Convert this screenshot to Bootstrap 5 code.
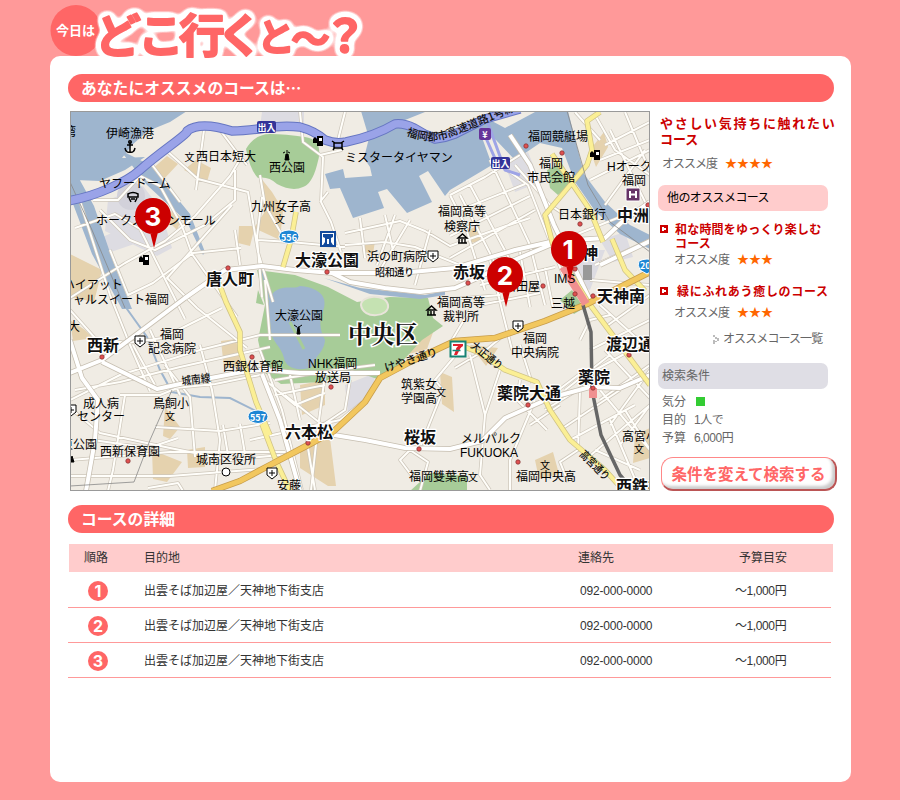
<!DOCTYPE html>
<html lang="ja">
<head>
<meta charset="utf-8">
<meta name="viewport" content="width=device-width, initial-scale=1">
<title>今日はどこ行くと〜？</title>
<link href="https://cdn.jsdelivr.net/npm/bootstrap@5.3.0/dist/css/bootstrap.min.css" rel="stylesheet">
<style>
body{background:#f99;font-family:"Liberation Sans","Noto Sans CJK JP",sans-serif;font-size:12px;line-height:18px;color:#333;width:900px;height:800px;overflow:hidden}
.site-logo{display:block;margin-left:50px;height:56px;overflow:visible;position:relative;z-index:1}
.logo-face{font-family:"Noto Sans CJK JP",sans-serif;font-weight:700}
.panel{width:801px;height:726px;margin-left:50px;border-radius:10px;padding:18px 17px 0 18px}
.bar-title{height:28px;width:766px;border-radius:14px;background:#f66;color:#fff;font:700 15.8px/28px "Noto Sans CJK JP",sans-serif;padding-left:13px;margin:0}
.map-box{display:block;width:580px;height:380px;margin:9px 0 0 2px;flex:none}
.side{width:181px;margin-left:7px;padding-top:14px;white-space:nowrap;flex:none}
.pick{font-size:13px;line-height:15.5px;font-weight:700;color:#c00;margin:0 0 0 3px;height:31px}
.pick-wide{letter-spacing:1.7px}
.rate{color:#666;height:18px;margin-left:5px}
.rate-name{letter-spacing:-1px;width:63px}
.stars{color:#f60;display:flex}
.pill{width:170px;height:26px;border-radius:7px;line-height:27px;margin-left:1px}
.pill-pink{background:#fcc;color:#000;padding-left:9px;letter-spacing:-.6px}
.pill-grey{background:#dfdee5;color:#666;padding-left:4px}
.course{color:#c00;font-weight:700;line-height:14px}
.course svg{flex:none;margin:2px 7px 0 3px}
.cond{color:#666;margin-left:5px}
.cond dt{width:32px;font-weight:400;height:18px}
.cond dd{margin:0;height:18px;letter-spacing:-.45px}
.green{display:inline-block;width:9px;height:9px;background:#3c3;margin-left:2px}
.again{width:176px;height:34px;border-radius:12px;background:#fff;border:1px solid #f88;border-right:2px solid #b55;border-bottom:2px solid #b55;box-shadow:inset -3px -3px 3px #ccc;color:#f66;font:700 15.5px/29px "Noto Sans CJK JP",sans-serif;padding:0;margin:10px 0 0 4px;text-align:center}
.plan{width:763px;table-layout:fixed;margin:11px 0 0;color:#333}
.plan th,.plan td{padding:0;vertical-align:middle;font-weight:400}
.plan td{padding-top:3px}
.plan thead{height:28px}
.plan th{background:#fcc}
.plan th:first-child{background:linear-gradient(90deg,#fff 1px,#fcc 1px)}
.plan th:last-child{box-shadow:2px 0 #fcc}
.plan tbody tr{height:35px;border-bottom:1px solid #f99}
.num{width:20px;height:20px;border-radius:50%;background:#f66;color:#fff;font:700 16px/21px Inter,sans-serif;text-align:center;display:block;margin-left:20px}
.lbl{font:12px "Liberation Sans","Noto Sans CJK JP",sans-serif;fill:#000}
.mark-sch{font:10px "Noto Sans CJK JP",sans-serif;fill:#000;text-anchor:middle}
.sta{font:700 16px "Noto Sans CJK JP",sans-serif;fill:#111;stroke:#fff;stroke-width:2.5px;paint-order:stroke;stroke-linejoin:round}
.way{font:500 11px "Noto Sans CJK JP",sans-serif;fill:#111}
.pin-no{font:700 26px Inter,sans-serif;fill:#fff;text-anchor:middle}
.tag{font:700 9px "Noto Sans CJK JP",sans-serif;fill:#fff;text-anchor:middle}
</style>
<script src="https://cdn.jsdelivr.net/npm/bootstrap@5.3.0/dist/js/bootstrap.bundle.min.js"></script>
</head>
<body>
<header>
<svg class="site-logo" width="330" height="56" viewBox="50 0 330 56" role="img" aria-label="今日はどこ行くと〜？">
<defs><filter id="halo" filterUnits="userSpaceOnUse" x="80" y="-5" width="300" height="75" color-interpolation-filters="sRGB"><feGaussianBlur in="SourceAlpha" stdDeviation="4"/><feComponentTransfer result="fat"><feFuncA type="linear" slope="14" intercept="-.5"/></feComponentTransfer><feFlood flood-color="#fff"/><feComposite in2="fat" operator="in"/><feMerge><feMergeNode/><feMergeNode in="SourceGraphic"/></feMerge></filter></defs>
<circle cx="76" cy="30.500" r="25.500" fill="#f66"/>
<g class="logo-face" font-size="46" stroke-linejoin="round" stroke-linecap="round" fill="#f66" stroke="#f66" stroke-width="1.800" filter="url(#halo)"><text x="95" y="51.500">ど</text><text x="138" y="52">こ</text><text x="179" y="52">行</text><text x="217" y="52">く</text><text x="257" y="50.500" font-size="38">と</text><text x="291" y="53" font-size="39">〜</text><text x="323" y="52" font-size="44">？</text></g>
<text class="logo-face" x="56" y="35" font-size="13" fill="#fff">今日は</text>
</svg>
</header>
<main class="panel bg-white">
<h1 class="bar-title">あなたにオススメのコースは…</h1>
<div class="d-flex">
<svg class="map-box" viewBox="70 111 580 380" role="img" aria-label="福岡市中央区の地図">
<defs>
<path id="minor" d="M78 195l32 100 20 50 20 46M93 200l25 0 22-24 20 10 22 40 10 28 20 28 25 35M100 210l30 30 25 10 50-25 30-25 0-30M75 228l40-14 25 15 20 40 25 50M70 298l55-35 40-22 30-25 35-40 12-20M110 250l10 25 8 20 25-12 40-30 48-5M180 135l12-10M168 152l30 27 50 13 10 60 15 50M204 130l-8 60M150 162l30 40M220 130l15 20 12 15M232 205l-40 45-25 28 30 30 50 40M262 197l-5 40 5 60M240 265l-5-35M258 240l32 2 55 5M300 112l3 30 20 15-2 45 10 20 10 30M320 155l22-5M320 202l8-10M345 112l-8 32M285 240l-20-35-5-30M345 233l55-12 25 10 25 15 50-18 30-10M345 245l40-3 30 5 50 20M360 218l5 40M385 215l10 45M395 215l-18 50M410 220l-30 50M430 230l-15 55M450 195l15 30 20 65M470 185l40 75M490 160l40 85 15 60M450 195l35-18 35-22M450 214l75-30M450 236l80-40M450 258l85-48M460 195l35 68M500 165l28 20 35 90M515 165l35 40 15 10M575 112l25 28M595 115l20 35 35 25M605 145l45-23M600 160l50-20M590 180l60-30M610 130l40 82M625 112l25 60M605 205l40-55M575 235l75-30M595 265l55-25M590 280l60 5M600 305l50 45M608 325l42-30M590 350l60-30M595 370l55-30M600 400l50-35M610 425l40-55M620 445l30-40M605 350l45 48M600 390l50 60M480 285l75-18M480 305l60-12M490 260l12 50 10 40M520 252l10 55M545 268l8 40M470 310l-18 30M440 300l60-5M520 345l12 38M70 310l25 28 32 5 35-5 60-30M70 400l50-25 80-25 60-15 80 0M75 390l45-8 60-15 90-20M120 395l40 0 50-20M133 345l22 40M150 330l30 65M125 395l-12 75-5 21M70 408l30 25 70 15 60 12 50-5M165 365l25 32 5 60M200 345l12 45 8 50-5 50M155 427l65 4 50-8M93 440l55 8 30-10M70 460l100-8 115 0M70 476l100 0 105-8M148 488l30-5 5 8M175 388l40-4 50-10M223 425l5 30M240 424l5 30M260 350l22 60 20 80M275 380l60-10 40-5M275 395l50-10M270 340l-5-60M265 380l30 25 30-12M325 375l-8 60-6 55M350 380l-5 30-30 20M290 375l10 45M250 440l90-20 25-20M335 435l-50-40M415 480l-15-20 10-10 18 12-8 29M460 350l-25 30 8 10-22 55M470 355l15 60-5 60 10 15M485 350l-30 18M480 355l30-25M500 370l-15 45M520 380l-3 20 30 30M535 400l-25 60 0 31M560 405l-30 20M545 400l40-30M565 390l45-35M545 410l65-40M580 390l-2 60-18 12 8 20M580 340l10-20 20-5M560 430l60-40M570 440l65-35M585 460l65-55M610 420l30 71M625 410l25 40M640 470l-45-20M305 430l10 60"/>
<path id="major" d="M70 373L102 360 145 328 185 298 225 270 262 266 295 270 332 273 350 282 385 288 420 292 455 288 480 277 505 264 550 245 575 240 605 238 622 222 650 202M332 273L400 273 455 268 515 250 550 242M102 362L157 389 180 384 242 372 270 369M262 370L300 373 380 373M70 340L82 378 98 400 95 440 86 491M262 374L280 420 300 491M334 435L365 440 405 448 450 449 482 441 505 418 550 398 590 387 620 388 650 375M510 135L530 165 540 190 554 225 590 300M600 265L650 241"/>
<path id="sun" d="M600 112L587 121 592 150 587 165 545 215 553 245 588 302 620 345 650 385M552 154L590 210 603 242M612 239L625 270 645 291M296 212L291 240 283 267M219 283L226 302 240 332 240 350 256 402 270 435M262 424L276 461 290 491M452 342L480 353 505 370 537 382 550 410 570 440 605 470 624 491"/>
<path id="gold" d="M212 491L240 481 270 465 310 444 334 431 365 402 380 378 410 362 455 341 495 338 545 321 587 304 650 272"/>
<path id="exp" d="M68 201Q90 197 110 188T140 170 170 146 187 131Q200 121 232 131 246 131 265 128T300 127Q315 131 325 140 335 144 346 142 375 136 395 124 404 123 414 128 425 135 435 139 445 138 455 134L485 119 520 109"/>
<path id="expname" d="M406 135Q430 145 450 137T520 109"/>
<path id="hosp" d="M-5-5h10v7l-5 4-5-4zM0-3v6M-3 0h6" fill="#fff" stroke="#000"/>
<g id="gas"><path d="M-1-5h6v10h-6zM-5-2l2-2 2 2v4h-4z" fill="#000"/><path d="M1-3h3v3h-3z" fill="#fff"/></g>
<g id="hall" fill="none" stroke="#000"><path d="M-4 4h9M-4-1h9L.5-5zM-3 0v4M0 0v4M3 0v4" stroke-width="1.400"/></g>
<circle id="dot" r="2.200" fill="#e05050" stroke="#833" stroke-width=".8"/>
<path id="pin" d="M-3 16h8L1 32zM0-18a18 18 0 1 1 0 36a18 18 0 1 1 0-36" fill="#c00"/>
</defs>
<rect x="70" y="111" width="580" height="380" fill="#f0ece4"/>
<g fill="#dddce2"><path d="M108 200l35-14 17 22 12 40-15 8-52-25zM100 238l35-15 8 18-35 12zM262 112h42v15h-44zM505 165l23-13 12 30-25 10zM345 385l30-12-2 20-25 22zM560 250h45l-15 40-25-10zM600 240l25-8 8 25-20 5z"/><circle cx="131" cy="196" r="14" fill="#d2d1da"/></g>
<g fill="#e5d2ae"><path d="M151 170l16-14 11 8-15 16zM184 170l12-10 15 8-4 14zM260 177l12 15 11 18-3 30-26-12 10-15zM239 226h16l-5 20-12-3zM70 254l32 16-8 32-24-5zM172 210l10 8-5 12-8-8zM70 320l15 10 8 8-20 3zM221 341l15-2 5 28-17 1zM165 407l15 20-10 12-7-3zM152 450l30 12-15 20-14-3zM187 450l18-3v20l-17 1zM300 385l25-5v25l-23 10zM300 450l30-12 6 48h-8l-28-18zM327 303l28 8-2 18-20 3zM400 345l35-18-8 22-18 5zM440 372l12 5 2 35-12-8zM590 150l14-18 4 15-12 20zM468 230l12-5v16l-9 2zM535 460l18-8 6 22-20 5zM470 345l28 3-12 18zM635 435l15-7v30l-17 5zM365 243l10-2-2 13-9-2z"/></g>
<g fill="#a7cc98"><path d="M246 149Q255 134 270 134T305 137 317 165Q312 184 303 187 292 192 277 184 268 176 258 178 250 170 246 149zM257 270l38 5 33 12 29 15 33-5 38 1 5 20 10 8-21 14-24 26-21 13-25-9-29 12-42 2-16-11-7-33 7-35zM547 170l14-7 12 20-15 12-8-7zM560 300l12-10 12 18-10 6zM410 491l20-18 37 3v15zM258 290l6 15-8-2z"/><path d="M361 305c0-10 25-12 27 0s-25 15-27 0z" fill="#c5e2b2" stroke="#e9e4da" stroke-width="2"/></g>
<g fill="#9eb5ce"><path d="M70 111H187L170 122 148 131 132 145 122 158 145 157 125 170 100 181 76 180 70 168zM70 162l24 44 20 58 18 45-10 0-30-55-22-58zM120 150l30 15 40 49 15 38-2 3-16-33-40-37-20-26zM361 111H568L574 135 584 174 605 202 630 225 650 235V249L620 234 595 211 575 182 562 148 540 143 515 160 496 140 480 132 492 165 450 190 445 196 428 171 419 176 432 202 407 213 387 189 378 192 384 208 353 218 340 188 330 189 325 174 343 169 345 178 372 176 370 167 364 158 369 138z"/><path d="M273 293c10-9 20-3 27-7 12 1 28 6 24 22-5 12-5 20 1 32-1 13-10 15-12 26-10 6-27 4-29-8-3-12-12-16-13-27 0-14-8-25 2-38z"/><path d="M324 278l36 10 65 7 20-4v4l-25 4-50-5z"/></g>
<path d="M400 122L425 112H535L505 128 490 120 450 137 420 128z" fill="#f0ece4"/>
<path d="M290 322l14 27" stroke="#a7cc98" stroke-width="3"/>
<path d="M122 302L147 337 160 370 172 392 200 397 230 398 262 414M262 270l7 30" fill="none" stroke="#9eb5ce" stroke-width="2"/>
<g fill="none" stroke-linejoin="round">
<use href="#minor" stroke="#cdc6ba" stroke-width="3.400"/><use href="#minor" stroke="#fffefa" stroke-width="2"/>
<use href="#major" stroke="#c6beb0" stroke-width="5.500"/><use href="#major" stroke="#fff" stroke-width="4"/>
<use href="#sun" stroke="#cfc285" stroke-width="5.500"/><use href="#sun" stroke="#fbef95" stroke-width="4"/>
<use href="#gold" stroke="#c79d4c" stroke-width="6.500"/><use href="#gold" stroke="#f2c75e" stroke-width="5"/>
<path d="M70 182L92 230 125 308M172 390L150 440 134 482 70 486M567 111L588 185 610 222 650 252" stroke="#888" stroke-width=".8"/>
<path d="M583 305L591 332 592 390 601 435 620 475 634 491" stroke="#666" stroke-width="3.500"/>
<path d="M563 267L586 304M593 388V398" stroke="#f09090" stroke-width="8"/>
<path d="M478 120L497 163M486 118L505 170 520 175" stroke="#9ea4e6" stroke-width="3"/>
<use href="#exp" stroke="#6676c2" stroke-width="9.500"/><use href="#exp" stroke="#9aa3e8" stroke-width="7.500"/>
</g>
<path d="M583 265h9v15h-9z" fill="#999"/>
<g><use href="#dot" x="228" y="268"/><use href="#dot" x="327" y="272"/><use href="#dot" x="468" y="283"/><use href="#dot" x="526" y="146"/><use href="#dot" x="562" y="153"/><use href="#dot" x="580" y="224"/><use href="#dot" x="648" y="205"/><use href="#dot" x="543" y="286"/><use href="#dot" x="575" y="269"/><use href="#dot" x="575" y="294"/><use href="#dot" x="593" y="296"/><use href="#dot" x="102" y="357"/><use href="#dot" x="128" y="461"/><use href="#dot" x="252" y="357"/><use href="#dot" x="331" y="387"/><use href="#dot" x="308" y="443"/><use href="#dot" x="419" y="449"/><use href="#dot" x="528" y="405"/><use href="#dot" x="593" y="388"/><use href="#dot" x="629" y="355"/><use href="#dot" x="518" y="462"/></g>
<g class="mark-sch"><text x="189.500" y="161">文</text><text x="280" y="223">文</text><text x="170" y="420">文</text><text x="441" y="396">文</text><text x="473" y="481">文</text><text x="545" y="469">文</text><text x="639" y="453">文</text></g>
<g><use href="#hosp" x="140" y="341"/><use href="#hosp" x="433" y="256"/><use href="#hosp" x="518" y="326"/><use href="#hosp" x="272" y="473"/><use href="#hosp" x="71" y="410"/><use href="#gas" x="144" y="260"/><use href="#gas" x="318" y="141"/><use href="#gas" x="595" y="155"/><use href="#hall" x="462" y="239"/><use href="#hall" x="431" y="311"/><circle cx="226" cy="472" r="4" fill="#fff" stroke="#000"/>
<g fill="none" stroke="#000" stroke-width="1.500"><path d="M130 142v10M127 145h6M125 148q1 5 5 4 4 1 5-4"/><circle cx="130" cy="142" r="1.300"/><path d="M128 194q5-3 10 0v3h-10zM129 198l2 4M137 198l-2 4M131 199h4M334 143h8v5h-8zM332 141l3 2M344 141l-3 2M333 150l2-3M343 150l-2-3"/></g>
<path d="M285 160l1-6h2l1 6zM283 153l2-1M290 153l-2-1M287 150v3M297 334l1-7h1l1 7zM294 325l3 2M302 325l-3 2M70 462l2-6 2 6z" fill="#000" stroke="#000"/></g>
<g>
<text class="lbl" x="64" y="136">湾</text><text class="lbl" x="106" y="138">伊崎漁港</text><text class="lbl" x="196" y="161">西日本短大</text><text class="lbl" x="99" y="188">ヤフードーム</text><text class="lbl" x="96" y="225">ホークスタウンモール</text><text class="lbl" x="63" y="289">ハイアット</text><text class="lbl" x="73" y="304">ャルスイート福岡</text><text class="lbl" x="269" y="172">西公園</text><text class="lbl" x="251" y="211">九州女子高</text><text class="lbl" x="345" y="162">ミスタータイヤマン</text><text class="lbl" x="367" y="261">浜の町病院</text><text class="lbl" x="438" y="216">福岡高等</text><text class="lbl" x="444" y="231">検察庁</text><text class="lbl" x="528" y="141">福岡競艇場</text><text class="lbl" x="539" y="168">福岡</text><text class="lbl" x="527" y="182">市民会館</text><text class="lbl" x="607" y="171">Hオークラ</text><text class="lbl" x="622" y="185">福岡</text><text class="lbl" x="558" y="219">日本銀行</text><text class="lbl" x="554" y="283">IMS</text><text class="lbl" x="504" y="291">岩田屋</text><text class="lbl" x="551" y="308">三越</text><text class="lbl" x="437" y="307">福岡高等</text><text class="lbl" x="443" y="321">裁判所</text><text class="lbl" x="68" y="331">大</text><text class="lbl" x="160" y="339">福岡</text><text class="lbl" x="148" y="353">記念病院</text><text class="lbl" x="223" y="371">西銀体育館</text><text class="lbl" x="83" y="408">成人病</text><text class="lbl" x="77" y="421">センター</text><text class="lbl" x="153" y="408">鳥飼小</text><text class="lbl" x="61" y="449">東公園</text><text class="lbl" x="100" y="456">西新保育園</text><text class="lbl" x="196" y="464">城南区役所</text><text class="lbl" x="277" y="490">安藤</text><text class="lbl" x="275" y="320">大濠公園</text><text class="lbl" x="308" y="368">NHK福岡</text><text class="lbl" x="315" y="382">放送局</text><text class="lbl" x="401" y="389">筑紫女</text><text class="lbl" x="401" y="403">学園高</text><text class="lbl" x="409" y="481">福岡雙葉高</text><text class="lbl" x="523" y="343">福岡</text><text class="lbl" x="511" y="357">中央病院</text><text class="lbl" x="461" y="443">メルパルク</text><text class="lbl" x="460" y="457">FUKUOKA</text><text class="lbl" x="622" y="441">高宮小</text><text class="lbl" x="516" y="481">福岡中央高</text>
</g>
<g class="way"><text x="375" y="276" font-size="10" textLength="39">昭和通り</text><text transform="translate(182 385) rotate(-7)" textLength="29" lengthAdjust="spacingAndGlyphs">城南線</text><text transform="translate(386 372) rotate(-18)" textLength="55">けやき通り</text><text transform="translate(470 347) rotate(39)" textLength="37" lengthAdjust="spacingAndGlyphs">大正通り</text><text transform="translate(579 455) rotate(45)" textLength="37" lengthAdjust="spacingAndGlyphs">高宮通り</text><text><textPath href="#expname">福岡都市高速道路1号線</textPath></text></g>
<g class="sta"><text x="206" y="285">唐人町</text><text x="295" y="266">大濠公園</text><text x="453" y="278">赤坂</text><text x="617" y="221">中洲</text><text x="566" y="259">天神</text><text x="597" y="302">天神南</text><text x="87" y="351">西新</text><text x="285" y="438">六本松</text><text x="404" y="443">桜坂</text><text x="497" y="399">薬院大通</text><text x="578" y="383">薬院</text><text x="606" y="350">渡辺通</text><text x="616" y="492">西鉄福岡</text></g>
<text x="348" y="343" textLength="70" fill="#111" stroke="#fff" stroke-width="3" paint-order="stroke" font-family="Liberation Serif, Noto Serif CJK JP, Noto Sans CJK JP, serif" font-size="23.500" font-weight="700">中央区</text>
<g><rect x="257" y="121" width="19" height="12" rx="2" fill="#339"/><text class="tag" x="266.500" y="130.500">出入</text><rect x="491" y="157" width="19" height="12" rx="2" fill="#339"/><text class="tag" x="500.500" y="166.500">出入</text><rect x="479" y="128" width="12" height="12" rx="2" fill="#639"/><text class="tag" x="485" y="137.500">¥</text>
<rect x="626" y="188" width="14" height="13" rx="1" fill="#636" stroke="#fff"/><path d="M630 191v7M636 191v7M630 194.500h6" stroke="#fff" stroke-width="2"/>
<rect x="321" y="232" width="14" height="14" fill="#fff" stroke="#124a9c" stroke-width="2"/><path d="M323 234h10v3l-2 1v4l2 3h-10l2-3v-4l-2-1z" fill="#124a9c"/><path d="M327 239h2v5h-2z" fill="#fff"/>
<g fill="#1d86d4" stroke="#fff"><path d="M281 232q8-4 16 0 4 5 0 9-8 5-16 0-4-4 0-9zM250 412q8-4 16 0 4 5 0 9-8 5-16 0-4-4 0-9zM639 261q8-4 16 0 2 5-2 9l-6 4-7-4q-3-5-1-9z"/></g><text class="tag" x="289" y="240.500">556</text><text class="tag" x="258" y="420.500">557</text><text class="tag" x="648" y="269">202</text>
<rect x="450.500" y="341.500" width="15" height="15" fill="#fff" stroke="#168374" stroke-width="2"/><path d="M453 344h10v2l-4 3h-3l2-3h-5z" fill="#e2202c"/><path d="M461 347l-4 8h-3l3-8z" fill="#e2202c"/><path d="M452.500 350.500h8" stroke="#168374" stroke-width="1.500"/></g>
<g><use href="#pin" x="153" y="216"/><use href="#pin" x="505" y="275"/><use href="#pin" x="569" y="249"/><text class="pin-no" x="153" y="226">3</text><text class="pin-no" x="505" y="285">2</text><text class="pin-no" x="568" y="259">1</text></g>
<rect x="70.500" y="111.500" width="579" height="379" fill="none" stroke="#999"/>
</svg>
<aside class="side">
<h2 class="pick"><span class="pick-wide">やさしい気持ちに触れたい</span><br>コース</h2>
<div class="rate d-flex" style="margin-top:8px"><span class="rate-name">オススメ度</span><span class="stars">★★★★</span></div>
<div class="pill pill-pink" style="margin-top:12px">他のオススメコース</div>
<div class="course d-flex" style="margin-top:12px"><svg width="8" height="9"><path d="M0 0h8v8H0z" fill="#c00"/><path d="M2 2h2v1h2v2H4v1H2z" fill="#fff"/></svg><span style="letter-spacing:.2px">和な時間をゆっくり楽しむ<br>コース</span></div>
<div class="rate d-flex" style="margin-left:17px"><span class="rate-name">オススメ度</span><span class="stars">★★★</span></div>
<div class="course d-flex" style="margin-top:16px;letter-spacing:.7px"><svg width="8" height="9"><path d="M0 0h8v8H0z" fill="#c00"/><path d="M2 2h2v1h2v2H4v1H2z" fill="#fff"/></svg><span style="margin-left:2px">緑にふれあう癒しのコース</span></div>
<div class="rate d-flex" style="margin-left:17px;margin-top:5px"><span class="rate-name">オススメ度</span><span class="stars">★★★</span></div>
<div class="rate d-flex align-items-center" style="margin-left:56px;margin-top:8px"><svg width="10" height="9"><path d="M0 0h2v2H0zM2 2h2v2H2zM0 5h2v2H0zM4 3h2v3H4zM2 6h2v1H2zM0 7h2v2H0z" fill="#bbb"/></svg><span style="letter-spacing:-.9px">オススメコース一覧</span></div>
<div class="pill pill-grey" style="margin-top:15px">検索条件</div>
<dl class="cond mb-0" style="margin-top:4px"><div class="d-flex"><dt>気分</dt><dd><i class="green"></i></dd></div><div class="d-flex"><dt>目的</dt><dd>1人で</dd></div><div class="d-flex"><dt>予算</dt><dd>6,000円</dd></div></dl>
<button class="again">条件を変えて検索する</button>
</aside>
</div>
<h2 class="bar-title" style="margin-top:14px">コースの詳細</h2>
<table class="plan">
<colgroup><col style="width:76px"><col style="width:434px"><col style="width:157px"><col></colgroup>
<thead><tr><th style="padding-left:16px">順路</th><th>目的地</th><th>連絡先</th><th style="padding-left:4px">予算目安</th></tr></thead>
<tbody>
<tr><td><span class="num">1</span></td><td>出雲そば加辺屋／天神地下街支店</td><td style="padding-left:2px;letter-spacing:-.2px">092-000-0000</td><td style="letter-spacing:-.4px">〜1,000円</td></tr>
<tr><td><span class="num">2</span></td><td>出雲そば加辺屋／天神地下街支店</td><td style="padding-left:2px;letter-spacing:-.2px">092-000-0000</td><td style="letter-spacing:-.4px">〜1,000円</td></tr>
<tr><td><span class="num">3</span></td><td>出雲そば加辺屋／天神地下街支店</td><td style="padding-left:2px;letter-spacing:-.2px">092-000-0000</td><td style="letter-spacing:-.4px">〜1,000円</td></tr>
</tbody>
</table>
</main>
</body>
</html>
